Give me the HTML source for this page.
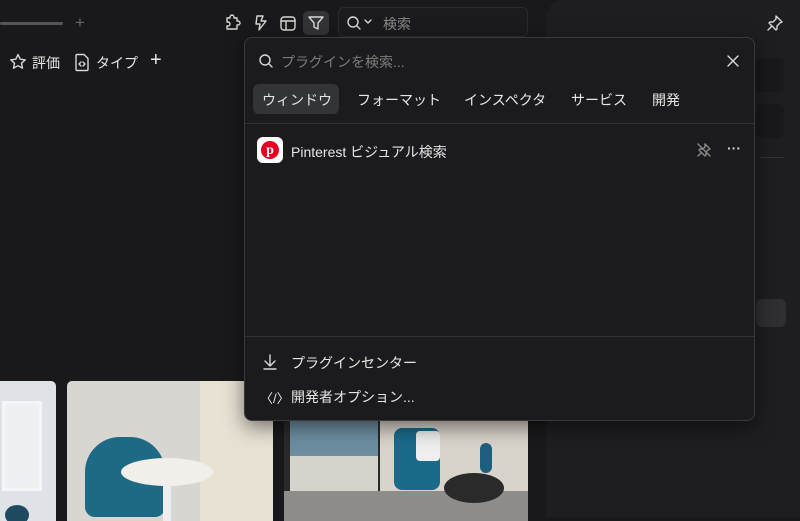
<!DOCTYPE html>
<html><head><meta charset="utf-8"><style>
*{margin:0;padding:0;box-sizing:border-box}
body{width:800px;height:517px;overflow:hidden;background:#19191b;position:relative;font-family:"Liberation Sans","Noto Sans CJK JP",sans-serif;color:#e6e6e6}
.abs{position:absolute}
svg{position:absolute;fill:none;stroke:#d8d8d8;stroke-width:1.4;stroke-linecap:round;stroke-linejoin:round}
.t{position:absolute;font-size:14px;white-space:nowrap}
</style></head><body>
<!-- right panel -->
<div class="abs" style="left:546px;top:0;width:260px;height:517px;background:#1e1e21;border-top-left-radius:18px"></div>
<div class="abs" style="left:756px;top:58px;width:28px;height:34px;background:#19191b;border-radius:6px"></div>
<div class="abs" style="left:756px;top:104px;width:28px;height:34px;background:#19191b;border-radius:6px"></div>
<div class="abs" style="left:756px;top:299px;width:30px;height:28px;background:#2f2f32;border-radius:6px"></div>
<div class="abs" style="left:760px;top:157px;width:24px;height:1px;background:#333"></div>
<svg style="left:766px;top:14px" width="18" height="18" viewBox="0 0 18 18"><path d="M10 2l6 6-2 1-3 3 0 3-1 1-7-7 1-1h3l3-3z M6 12l-4 4"/></svg>

<!-- top bar -->
<div class="abs" style="left:0;top:22px;width:63px;height:3px;background:#555;border-radius:2px"></div>
<div class="t" style="left:75px;top:13px;color:#666;font-size:17px">+</div>
<svg style="left:224px;top:14px" width="18" height="18" viewBox="0 0 18 18"><path d="M6 3a2 2 0 0 1 4 0v1h3v3h1a2 2 0 0 1 0 4h-1v4H3v-3h1a2 2 0 0 0 0-4H3V4h3z"/></svg>
<svg style="left:253px;top:14px" width="16" height="18" viewBox="0 0 16 18"><path d="M4 2h6L8 7h5l-7 9 1-6H3z"/></svg>
<svg style="left:279px;top:14px" width="18" height="18" viewBox="0 0 18 18"><rect x="2" y="3" width="14" height="13" rx="3"/><path d="M2 7h14M7 7v9"/></svg>
<div class="abs" style="left:303px;top:11px;width:26px;height:24px;background:#333436;border-radius:5px"></div>
<svg style="left:307px;top:14px" width="18" height="18" viewBox="0 0 18 18"><path d="M2 3h14l-5 6v6l-4-2V9z"/></svg>
<div class="abs" style="left:338px;top:7px;width:190px;height:30px;border:1px solid #2b2b2e;border-radius:6px;background:#1b1b1e"></div>
<svg style="left:346px;top:15px" width="16" height="16" viewBox="0 0 16 16"><circle cx="7" cy="7" r="5"/><path d="M11 11l3 3"/></svg>
<svg style="left:364px;top:19px" width="8" height="6" viewBox="0 0 8 6" style="stroke-width:1"><path d="M1 1l3 3 3-3"/></svg>
<div class="t" style="left:383px;top:14px;color:#8a8a8a">検索</div>

<!-- filter row -->
<svg style="left:9px;top:53px" width="18" height="18" viewBox="0 0 18 18"><path d="M9 1.5l2.2 4.7 5 .6-3.7 3.4 1 5-4.5-2.5-4.5 2.5 1-5L1.8 6.8l5-.6z"/></svg>
<div class="t" style="left:32px;top:53px">評価</div>
<svg style="left:74px;top:53px" width="16" height="19" viewBox="0 0 16 19"><path d="M3 1.5h7l4 4v11a1 1 0 0 1-1 1H3a1 1 0 0 1-1-1v-14a1 1 0 0 1 1-1z M7 9l-2 2 2 2M9 9l2 2-2 2"/></svg>
<div class="t" style="left:96px;top:53px">タイプ</div>
<div class="t" style="left:150px;top:49px;font-size:20px;font-weight:300">+</div>

<!-- photos -->
<div class="abs" style="left:0;top:381px;width:56px;height:140px;background:#dfe3e8;border-radius:0 5px 0 0;overflow:hidden">
 <div class="abs" style="left:2px;top:20px;width:40px;height:90px;border:3px solid #f4f5f7;background:#eef0f3"></div>
 <div class="abs" style="left:5px;top:124px;width:24px;height:20px;background:#1f4a60;border-radius:50%"></div>
</div>
<div class="abs" style="left:67px;top:381px;width:206px;height:140px;background:#d8d6d1;border-radius:5px 5px 0 0;overflow:hidden">
 <div class="abs" style="left:133px;top:0;width:80px;height:140px;background:#e8e2d4"></div>
 <div class="abs" style="left:18px;top:56px;width:80px;height:80px;background:#1e6a85;border-radius:35px 35px 10px 10px"></div>
 <div class="abs" style="left:54px;top:77px;width:92px;height:28px;background:#f1efe9;border-radius:50%"></div>
 <div class="abs" style="left:96px;top:103px;width:8px;height:40px;background:#eee"></div>
</div>
<div class="abs" style="left:284px;top:381px;width:244px;height:140px;background:#c9c3ba;border-radius:5px 5px 0 0;overflow:hidden">
 <div class="abs" style="left:0;top:0;width:100px;height:140px;background:#2a2a2a"></div>
 <div class="abs" style="left:6px;top:0;width:88px;height:75px;background:#6c8ea0"></div>
 <div class="abs" style="left:6px;top:75px;width:88px;height:70px;background:#d6d2cc"></div>
 <div class="abs" style="left:96px;top:0;width:148px;height:140px;background:#d9d4cb"></div>
 <div class="abs" style="left:0;top:110px;width:244px;height:30px;background:#8f8d8a"></div>
 <div class="abs" style="left:110px;top:47px;width:46px;height:62px;background:#1b6a8a;border-radius:8px"></div>
 <div class="abs" style="left:132px;top:50px;width:24px;height:30px;background:#eee;border-radius:4px"></div>
 <div class="abs" style="left:160px;top:92px;width:60px;height:30px;background:#2a2a2a;border-radius:50%"></div>
 <div class="abs" style="left:196px;top:62px;width:12px;height:30px;background:#1e5f80;border-radius:6px"></div>
</div>

<!-- popup -->
<div class="abs" style="left:244px;top:37px;width:511px;height:384px;background:#1b1b1d;border:1px solid #3a3a3d;border-radius:8px;box-shadow:0 6px 20px rgba(0,0,0,.5)"></div>
<svg style="left:258px;top:53px" width="16" height="16" viewBox="0 0 16 16"><circle cx="7" cy="7" r="5"/><path d="M11 11l3 3"/></svg>
<div class="t" style="left:281px;top:52px;color:#7d7d7d">プラグインを検索...</div>
<svg style="left:726px;top:54px" width="14" height="14" viewBox="0 0 14 14"><path d="M2 2l10 10M12 2L2 12"/></svg>
<div class="abs" style="left:253px;top:84px;width:86px;height:30px;background:#333436;border-radius:6px"></div>
<div class="t" style="left:262px;top:90px">ウィンドウ</div>
<div class="t" style="left:357px;top:90px">フォーマット</div>
<div class="t" style="left:464px;top:90px">インスペクタ</div>
<div class="t" style="left:571px;top:90px">サービス</div>
<div class="t" style="left:652px;top:90px">開発</div>
<div class="abs" style="left:245px;top:123px;width:509px;height:1px;background:#333336"></div>
<div class="abs" style="left:257px;top:137px;width:26px;height:26px;background:#fff;border-radius:6px"></div>
<div class="abs" style="left:261px;top:141px;width:18px;height:18px;background:#e60023;border-radius:50%;color:#fff;font-size:14px;font-weight:bold;text-align:center;line-height:19px;font-family:'Liberation Serif',serif">p</div>
<div class="t" style="left:291px;top:142px">Pinterest ビジュアル検索</div>
<svg style="left:696px;top:142px" width="16" height="16" viewBox="0 0 16 16" style="stroke:#888"><path d="M9 2l5 5-2 1-2 2v3l-1 1-6-6 1-1h3l2-2z M5 11l-3 3 M2 2l12 12" stroke="#888"/></svg>
<div class="t" style="left:727px;top:140px;color:#ccc;font-weight:bold">···</div>
<div class="abs" style="left:245px;top:336px;width:509px;height:1px;background:#333336"></div>
<svg style="left:262px;top:353px" width="16" height="18" viewBox="0 0 16 18"><path d="M8 2v11M3 8l5 5 5-5M2 16h12"/></svg>
<div class="t" style="left:291px;top:353px">プラグインセンター</div>
<div class="t" style="left:260px;top:388px;font-size:13px">〈/〉</div>
<div class="t" style="left:291px;top:387px">開発者オプション...</div>
</body></html>
